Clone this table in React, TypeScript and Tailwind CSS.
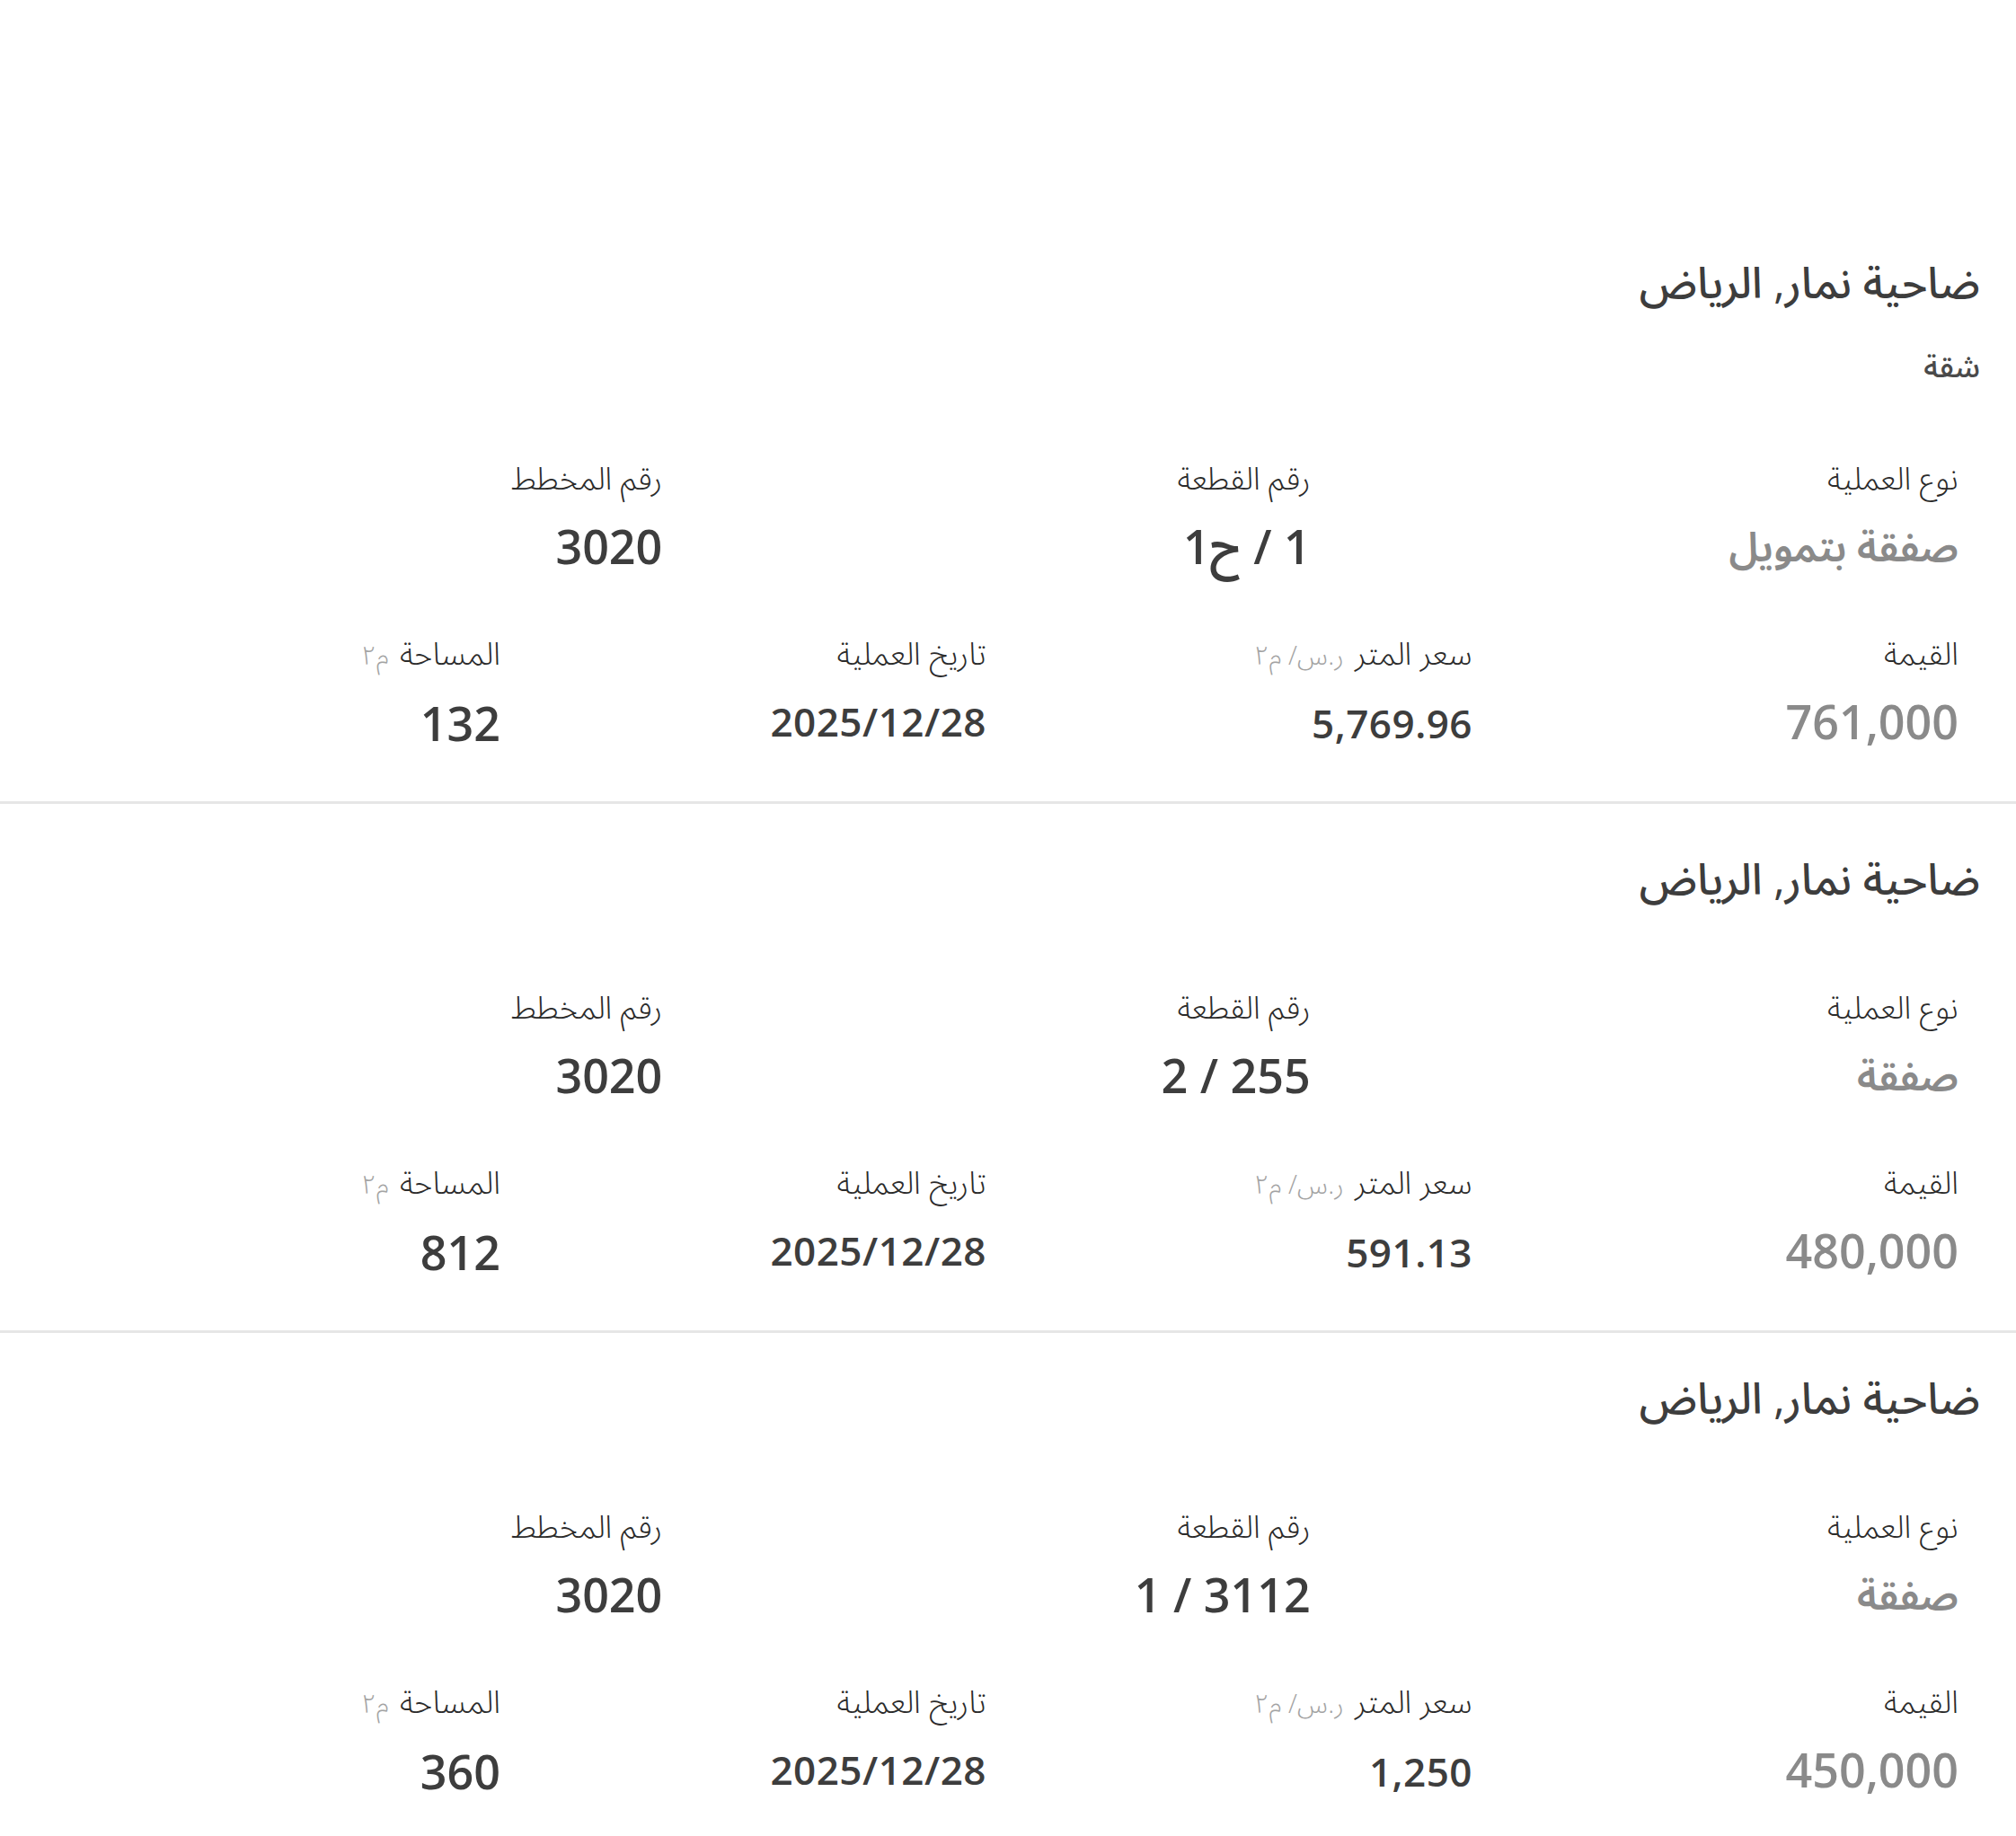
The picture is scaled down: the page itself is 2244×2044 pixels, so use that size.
const deals = [
  {
    title: "ضاحية نمار, الرياض",
    kind: "شقة",
    type: "صفقة بتمويل",
    plot: "1 / ح1",
    plan: "3020",
    value: "761,000",
    ppm: "5,769.96",
    date: "2025/12/28",
    area: "132",
  },
  {
    title: "ضاحية نمار, الرياض",
    type: "صفقة",
    plot: "255 / 2",
    plan: "3020",
    value: "480,000",
    ppm: "591.13",
    date: "2025/12/28",
    area: "812",
  },
  {
    title: "ضاحية نمار, الرياض",
    type: "صفقة",
    plot: "3112 / 1",
    plan: "3020",
    value: "450,000",
    ppm: "1,250",
    date: "2025/12/28",
    area: "360",
  },
];

type Deal = (typeof deals)[number] & { kind?: string };

function Label({ text, unit }: { text: string; unit?: string }) {
  return (
    <div className="flex items-baseline gap-3 text-[35px] leading-[48px] font-light text-[#2b2b2b]">
      <span>{text}</span>
      {unit && <span className="text-[29px] text-[#a3a3a3]">{unit}</span>}
    </div>
  );
}

function Cell({ label, unit, value, tone = "dark", size = "lg" }: {
  label: string;
  unit?: string;
  value: string;
  tone?: "dark" | "muted";
  size?: "lg" | "md" | "ar";
}) {
  const sizing =
    size === "lg"
      ? "text-[52px] font-semibold"
      : size === "ar"
        ? "text-[45px] font-semibold"
        : "text-[44px] font-semibold tracking-[0.5px]";
  return (
    <div className="ps-[24px]">
      <Label text={label} unit={unit} />
      <div className={`mt-[20px] leading-[64px] ${sizing} ${tone === "muted" ? "text-[#8a8a8a]" : "text-[#3d3d3d]"}`}>
        {value}
      </div>
    </div>
  );
}

function DealCard({ deal, index }: { deal: Deal; index: number }) {
  return (
    <div className={`border-b-[3px] border-[#e6e6e6] ps-[40px] pe-[42px] pb-[55px] ${index === 0 ? "pt-0" : index === 1 ? "pt-[54px]" : "pt-[43px]"}`}>
      <h2 className="text-[48px] leading-[58px] font-medium text-[#3d3d3d]">{deal.title}</h2>
      {deal.kind && (
        <div className="mt-[42px] text-[34px] leading-[44px] font-medium text-[#4a4a4a]">{deal.kind}</div>
      )}
      <div className={`-me-[2px] grid grid-cols-3 ${deal.kind ? "mt-[79px]" : "mt-[90px]"}`}>
        <Cell label="نوع العملية" value={deal.type} tone="muted" size="ar" />
        <Cell label="رقم القطعة" value={deal.plot} />
        <Cell label="رقم المخطط" value={deal.plan} />
      </div>
      <div className="-me-[2px] mt-[63px] grid grid-cols-4">
        <Cell label="القيمة" value={deal.value} tone="muted" />
        <Cell label="سعر المتر" unit="ر.س/ م٢" value={deal.ppm} size="md" />
        <Cell label="تاريخ العملية" value={deal.date} size="md" />
        <Cell label="المساحة" unit="م٢" value={deal.area} />
      </div>
    </div>
  );
}

export default function App() {
  return (
    <div dir="rtl" className="min-h-screen bg-white font-['Open_Sans','Noto_Sans_Arabic','DejaVu_Sans',sans-serif]">
      <div className="h-[285px]" />
      {deals.map((d, i) => (
        <DealCard key={i} deal={d} index={i} />
      ))}
    </div>
  );
}
